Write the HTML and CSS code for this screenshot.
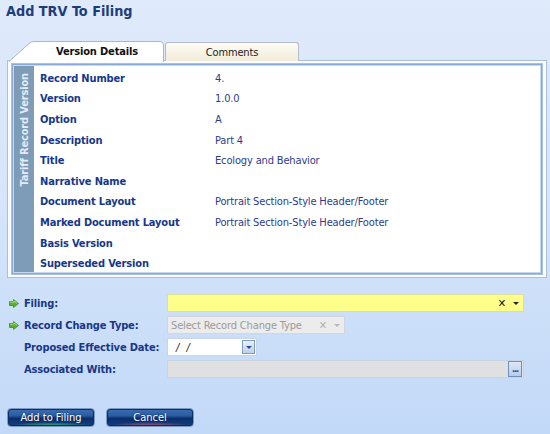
FILE: index.html
```html
<!DOCTYPE html>
<html>
<head>
<meta charset="utf-8">
<link rel="stylesheet" href="styles.css">
</head>
<body>
<div class="page">
  <h1 class="title">Add TRV To Filing</h1>
  <div class="tabs">
    <div class="tab tab-active">
      <svg class="tab-shape" width="156" height="21" viewBox="0 0 156 21">
        <path d="M0.5 21 L21 2.5 Q23 0.5 26 0.5 L152 0.5 Q155.5 0.5 155.5 4 L155.5 21" fill="#ffffff" stroke="#a9b8cc"/>
      </svg>
      <span class="tab-label">Version Details</span>
    </div>
    <div class="tab tab-inactive"><span class="tab-label">Comments</span></div>
  </div>
  <div class="panel">
    <div class="inner">
      <div class="side"><span class="side-text">Tariff Record Version</span></div>
      <div class="details">
        <div class="row"><span class="lbl">Record Number</span><span class="val">4.</span></div>
        <div class="row"><span class="lbl">Version</span><span class="val">1.0.0</span></div>
        <div class="row"><span class="lbl">Option</span><span class="val">A</span></div>
        <div class="row"><span class="lbl">Description</span><span class="val">Part 4</span></div>
        <div class="row"><span class="lbl">Title</span><span class="val">Ecology and Behavior</span></div>
        <div class="row"><span class="lbl">Narrative Name</span><span class="val"></span></div>
        <div class="row"><span class="lbl">Document Layout</span><span class="val">Portrait Section-Style Header/Footer</span></div>
        <div class="row"><span class="lbl">Marked Document Layout</span><span class="val">Portrait Section-Style Header/Footer</span></div>
        <div class="row"><span class="lbl">Basis Version</span><span class="val"></span></div>
        <div class="row"><span class="lbl">Superseded Version</span><span class="val"></span></div>
      </div>
    </div>
  </div>
  <div class="form">
    <div class="frow">
      <span class="req"><svg width="10" height="9" viewBox="0 0 10 9"><path d="M0.5 2.5 H4.5 V0.5 L9.5 4.5 L4.5 8.5 V6.5 H0.5 Z" fill="#5cb030" stroke="#3f8a1c" stroke-width="0.8"/><path d="M1.2 3.2 H5.2 V2 L8 4.3" fill="none" stroke="#b6e68f" stroke-width="0.8"/></svg></span>
      <span class="flbl">Filing:</span>
      <div class="field field-filing"><span class="fill"></span><span class="clear">✕</span><span class="caret"></span></div>
    </div>
    <div class="frow">
      <span class="req"><svg width="10" height="9" viewBox="0 0 10 9"><path d="M0.5 2.5 H4.5 V0.5 L9.5 4.5 L4.5 8.5 V6.5 H0.5 Z" fill="#5cb030" stroke="#3f8a1c" stroke-width="0.8"/><path d="M1.2 3.2 H5.2 V2 L8 4.3" fill="none" stroke="#b6e68f" stroke-width="0.8"/></svg></span>
      <span class="flbl">Record Change Type:</span>
      <div class="field field-type"><span class="fill placeholder">Select Record Change Type</span><span class="clear dim">✕</span><span class="caret dim"></span></div>
    </div>
    <div class="frow">
      <span class="req"></span>
      <span class="flbl">Proposed Effective Date:</span>
      <div class="field field-date"><span class="fill date">/ /</span><span class="dbtn"><span class="caret"></span></span></div>
    </div>
    <div class="frow">
      <span class="req"></span>
      <span class="flbl">Associated With:</span>
      <div class="field field-assoc"><span class="fill"></span><span class="ebtn">...</span></div>
    </div>
  </div>
  <div class="buttons">
    <button class="btn btn-add">Add to Filing</button>
    <button class="btn btn-cancel">Cancel</button>
  </div>
</div>
</body>
</html>
```
FILE: styles.css
```css
html, body {
  margin: 0;
  padding: 0;
}
body {
  width: 550px;
  height: 434px;
  overflow: hidden;
  background: linear-gradient(#dfeafb 0px, #d6e5fa 200px, #c2d9f8 434px);
  font-family: "DejaVu Sans Condensed", "DejaVu Sans", sans-serif;
  font-size: 11px;
  letter-spacing: -0.15px;
}
.page {
  display: flex;
  flex-direction: column;
}
.title {
  margin: 0;
  padding: 3px 0 0 6px;
  height: 18px;
  font-size: 14.3px;
  font-weight: bold;
  color: #1d3c7a;
  letter-spacing: 0;
}
.tabs {
  display: flex;
  margin-top: 20px;
  padding-left: 8px;
  height: 19px;
  position: relative;
  z-index: 1;
}
.tab {
  height: 20px;
  box-sizing: border-box;
  display: flex;
  align-items: center;
  justify-content: center;
  font-size: 11px;
}
.tab-active {
  width: 156px;
  position: relative;
  padding-left: 22px;
  font-weight: bold;
  color: #111;
}
.tab-shape {
  position: absolute;
  left: 0;
  top: 0;
}
.tab-label {
  position: relative;
}
.tab-inactive {
  width: 134px;
  margin-left: 1px;
  margin-top: 1px;
  height: 19px;
  background: linear-gradient(#fdfbf4, #f1ebd8);
  border: 1px solid #b4bdca;
  border-bottom: none;
  border-radius: 3px 3px 0 0;
  color: #222;
}
.panel {
  margin: 0 3px 0 7px;
  height: 218px;
  box-sizing: border-box;
  border: 1px solid #a9c0dc;
  background: #fbfcfe;
  padding: 3px 4px 3px 4px;
}
.inner {
  height: 100%;
  box-sizing: border-box;
  border: 1px solid #88a9d8;
  outline: 1px solid #a8c2e6;
  outline-offset: 0;
  box-shadow: inset 0 0 0 1px #c7d8ef;
  background: #ffffff;
  display: flex;
  padding: 1px;
}
.side {
  width: 20px;
  flex: none;
  background: #7e9bb8;
  display: flex;
  align-items: flex-start;
  justify-content: center;
  padding-top: 7px;
  box-sizing: border-box;
}
.side-text {
  writing-mode: vertical-rl;
  transform: rotate(180deg);
  color: #e4ecf4;
  font-weight: bold;
  font-size: 11px;
  white-space: nowrap;
}
.details {
  display: flex;
  flex-direction: column;
  padding: 2px 0 0 6px;
}
.row {
  display: flex;
  flex: none;
  height: 20.6px;
  align-items: center;
}
.lbl {
  width: 175px;
  font-weight: bold;
  color: #16378a;
  white-space: nowrap;
}
.val {
  color: #2d3b8e;
  white-space: nowrap;
}
.form {
  display: flex;
  flex-direction: column;
  gap: 4px;
  margin-top: 16px;
}
.frow {
  display: flex;
  align-items: center;
  height: 18px;
}
.req {
  width: 24px;
  flex: none;
  display: flex;
  justify-content: flex-start;
  padding-left: 9px;
  box-sizing: border-box;
}
.flbl {
  width: 143px;
  flex: none;
  font-weight: bold;
  color: #16378a;
  white-space: nowrap;
}
.field {
  height: 18px;
  box-sizing: border-box;
  border: 1px solid #c9d6e8;
  display: flex;
  align-items: center;
}
.fill {
  flex: 1;
  padding-left: 3px;
  white-space: nowrap;
  overflow: hidden;
}
.field-filing {
  width: 357px;
  background: #fefe8a;
  border-color: #d9df9c;
}
.field-type {
  width: 178px;
  background: #ececec;
  border-color: #cfd6e0;
}
.placeholder {
  color: #9a9a9a;
  font-size: 11px;
}
.clear {
  font-size: 11px;
  color: #111;
  margin-right: 7px;
}
.clear.dim {
  color: #b0b0b0;
}
.caret {
  width: 0;
  height: 0;
  border-left: 3px solid transparent;
  border-right: 3px solid transparent;
  border-top: 3px solid #222;
  margin-right: 4px;
}
.caret.dim {
  border-top-color: #b8b8b8;
}
.field-date {
  width: 90px;
  background: #ffffff;
  padding-right: 1px;
}
.date {
  padding-left: 8px;
  font-style: italic;
  letter-spacing: 2px;
  color: #222;
}
.dbtn {
  width: 13px;
  height: 14px;
  box-sizing: border-box;
  border: 1px solid #7d9cc8;
  background: linear-gradient(#e8f0fb, #bcd1ee);
  display: flex;
  align-items: center;
  justify-content: center;
}
.dbtn .caret {
  margin: 0;
  border-top-color: #2b4d86;
}
.field-assoc {
  width: 357px;
  background: #e0e0e3;
  border-color: #c7d2e2;
  padding-right: 1px;
}
.ebtn {
  width: 14px;
  height: 16px;
  box-sizing: border-box;
  border: 1px solid #6f8fbf;
  background: linear-gradient(#dde8f8, #b8cdea);
  color: #1c3d7a;
  font-size: 9px;
  font-weight: bold;
  line-height: 14px;
  text-align: center;
  letter-spacing: -1px;
}
.buttons {
  display: flex;
  gap: 11px;
  margin-top: 30px;
  padding-left: 7px;
}
.btn {
  width: 88px;
  height: 19px;
  border: 1px solid #7d99c0;
  border-radius: 4px;
  font-family: "DejaVu Sans Condensed", "DejaVu Sans", sans-serif;
  font-size: 11px;
  color: #ffffff;
  text-shadow: 0 0 2px #0a2050;
  padding: 0;
  box-shadow: inset 0 0 0 1px #0c2e66;
}
.btn-add {
  background:
    radial-gradient(ellipse 40px 4px at 50% 100%, rgba(60, 200, 120, 0.9), rgba(60, 200, 120, 0) 100%),
    linear-gradient(#3d6fb4 0%, #2a5ba0 40%, #0b2d6b 55%, #14407f 100%);
}
.btn-cancel {
  background:
    radial-gradient(ellipse 40px 4px at 50% 100%, rgba(200, 90, 110, 0.9), rgba(200, 90, 110, 0) 100%),
    linear-gradient(#3d6fb4 0%, #2a5ba0 40%, #0b2d6b 55%, #14407f 100%);
}
```
